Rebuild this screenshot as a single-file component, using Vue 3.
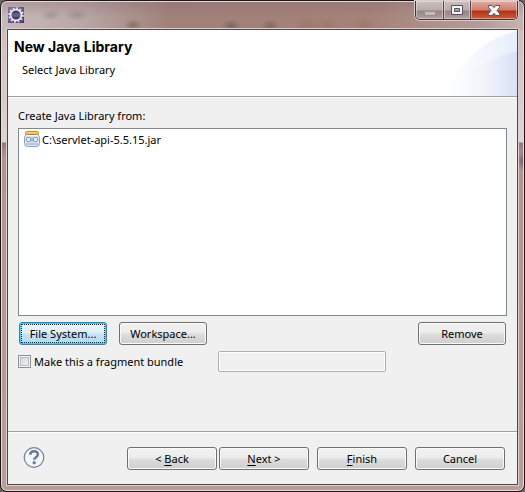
<script setup>
import { ref } from 'vue'

const libraries = ref(['C:\\servlet-api-5.5.15.jar'])
const fragment = ref(false)
const host = ref('')
</script>

<template>
  <div class="desktop">
    <div class="window">
      <div class="titlebar">
        <svg class="app-icon" viewBox="0 0 16 16" aria-hidden="true">
          <defs>
            <linearGradient id="appBg" x1="0" y1="0" x2="1" y2="1">
              <stop offset="0" stop-color="#8272a4" />
              <stop offset="1" stop-color="#4a3584" />
            </linearGradient>
            <linearGradient id="appCore" x1="0" y1="0" x2="0" y2="1">
              <stop offset="0" stop-color="#302c56" />
              <stop offset=".5" stop-color="#5d5b80" />
              <stop offset="1" stop-color="#28244c" />
            </linearGradient>
          </defs>
          <rect width="16" height="16" fill="url(#appBg)" />
          <circle cx="8" cy="8" r="6.9" fill="none" stroke="#e4dfdc" stroke-width="1.8" stroke-dasharray="1.9 1.71" />
          <circle cx="8" cy="8" r="5.4" fill="url(#appCore)" stroke="#efebe7" stroke-width="1.7" />
          <path d="M3.5 7h9M3.5 9h9" stroke="#817e9c" stroke-width=".6" />
        </svg>
        <div class="caption">
          <button class="cap min" aria-label="Minimize" disabled>
            <svg viewBox="0 0 12 5" width="12" height="5"><rect x=".5" y=".5" width="11" height="4" fill="#c5bab9" stroke="#9a8f90" /></svg>
          </button>
          <button class="cap max" aria-label="Maximize">
            <svg viewBox="0 0 12 10" width="12" height="10">
              <path fill-rule="evenodd" d="M.5.5h11v9H.5zM3.500 3.500v3h5v-3z" fill="#f5f3f3" stroke="#555063" />
            </svg>
          </button>
          <button class="cap close" aria-label="Close">
            <svg viewBox="0 0 12 11" width="12" height="11">
              <path d="M.5.5h3.700L6 2.700 7.800.5h3.700v2L9 5.500l2.500 3v2H7.800L6 8.300l-1.800 2.200H.5v-2l2.500-3-2.500-3z" fill="#f7f5f5" stroke="#575464" />
            </svg>
          </button>
        </div>
      </div>

      <main class="client">
        <header class="banner">
          <div class="heading">
            <h1>New Java Library</h1>
            <p>Select Java Library</p>
          </div>
          <svg class="swoosh" viewBox="0 0 75 66" aria-hidden="true">
            <defs>
              <linearGradient id="sw1"><stop offset="0" stop-color="#fff" /><stop offset="1" stop-color="#e9effa" /></linearGradient>
              <linearGradient id="sw2"><stop offset=".1" stop-color="#fff" stop-opacity="0" /><stop offset="1" stop-color="#d9e1f6" /></linearGradient>
              <linearGradient id="sw3"><stop offset="0" stop-color="#fff" stop-opacity="0" /><stop offset="1" stop-color="#e4edfa" /></linearGradient>
            </defs>
            <path d="M2 66C20 28 42 9 75 1v65z" fill="url(#sw1)" />
            <path d="M28 66C35 32 51 10 75 1v65z" fill="url(#sw3)" />
            <path d="M2 66C23 42 47 26 75 22v44z" fill="url(#sw2)" />
          </svg>
        </header>

        <section class="body">
          <label id="list-label" class="list-label">Create Java Library from:</label>
          <ul class="list" aria-labelledby="list-label">
            <li v-for="lib in libraries" :key="lib">
              <svg viewBox="0 0 16 16" width="16" height="16" aria-hidden="true">
                <rect x=".5" y="3.500" width="15" height="12" rx="3" fill="#d9e5f2" stroke="#8da4be" />
                <path d="M2 13h12" stroke="#b4c7dc" stroke-width="2" />
                <rect x="1.500" y=".5" width="13" height="3" rx="1" fill="#e5bd55" stroke="#b78c24" />
                <path d="M2.500 1.500h11" stroke="#f4d983" />
                <path d="M2 4.500h12" stroke="#f7fafd" />
                <rect x="2.500" y="6.500" width="4" height="4" rx="1.500" fill="#f5f9fd" stroke="#7f96b3" />
                <path d="M8 6v5" stroke="#7f96b3" />
                <rect x="9.500" y="6.500" width="4" height="4" rx="1.500" fill="#f5f9fd" stroke="#7f96b3" />
              </svg>
              <span>{{ lib }}</span>
            </li>
          </ul>
          <div class="actions">
            <button class="btn focused">File System...</button>
            <button class="btn">Workspace...</button>
            <button class="btn push">Remove</button>
          </div>
          <div class="options">
            <label class="check"><input v-model="fragment" type="checkbox" />Make this a fragment bundle</label>
            <input v-model="host" class="field" type="text" aria-label="Fragment host" :disabled="!fragment" />
          </div>
        </section>

        <footer class="footer">
          <button class="help" aria-label="Help">
            <svg viewBox="0 0 22 22" width="22" height="22">
              <circle cx="11" cy="10.500" r="9.800" fill="#f4f5f7" stroke="#71829e" stroke-width="1.200" />
              <path d="M7.300 7.800C7.300 3.100 14.900 3.200 14.900 7.400c0 2.800-3.700 2.800-3.700 5.400" fill="none" stroke="#657a9c" stroke-width="2.500" />
              <rect x="9.700" y="14.200" width="3" height="3" rx="1" fill="#657a9c" />
            </svg>
          </button>
          <div class="nav">
            <button class="btn">&lt; <u>B</u>ack</button>
            <button class="btn"><u>N</u>ext &gt;</button>
          </div>
          <button class="btn"><u>F</u>inish</button>
          <button class="btn">Cancel</button>
        </footer>
      </main>
    </div>
  </div>
</template>

<style>
body {
  margin: 0;
}
</style>

<style scoped>
* {
  box-sizing: border-box;
}
.desktop {
  display: flex;
  min-height: 100vh;
  background: #6b6263;
  font: 11px/16px "Noto Sans", "Open Sans", sans-serif;
  color: #000;
}
.window {
  flex: 1;
  display: flex;
  flex-direction: column;
  padding: 0 5px 5px;
  border: 1px solid #1c1519;
  border-radius: 7px;
  box-shadow: inset 0 0 0 1px #e6dad8;
  background:
    radial-gradient(ellipse 10px 6px at 50px 14px, #74676b55, transparent),
    radial-gradient(ellipse 12px 6px at 76px 14px, #74676b55, transparent),
    radial-gradient(ellipse 9px 6px at 132px 24px, #6c5a5799, transparent),
    radial-gradient(ellipse 10px 7px at 230px 25px, #6c6059bb, transparent),
    radial-gradient(ellipse 9px 7px at 269px 25px, #6c6059aa, transparent),
    radial-gradient(ellipse 12px 8px at 306px 24px, #97745d99, transparent),
    radial-gradient(ellipse 12px 8px at 326px 24px, #97745d99, transparent),
    radial-gradient(ellipse 12px 8px at 363px 24px, #97745d99, transparent),
    radial-gradient(ellipse 8px 10px at 100% 160px, #6b5a74, transparent),
    linear-gradient(#8a6c7466, transparent 16px) 0 0 / 100% 29px no-repeat,
    linear-gradient(90deg, #c8bab9, #b9a7a6 80px, #a08079 170px, #a58279 370px, #b39c99 480px, #c5b4b1) 0 0 / 100% 29px no-repeat,
    linear-gradient(#c9b9b7, #dfd5d3 141px, #927879 142px, #b2958e 155px, #b99e97);
}
.titlebar {
  display: flex;
  justify-content: space-between;
  height: 27px;
  padding: 0 1px 0 2px;
}
.app-icon {
  width: 16px;
  height: 16px;
  margin-top: 6px;
}
.caption {
  display: flex;
  height: 19px;
  border: 1px solid #403438;
  border-top: 0;
  border-radius: 0 0 5px 5px;
  box-shadow: 0 0 0 1px #d9cbc9;
  overflow: hidden;
}
.cap {
  display: flex;
  align-items: center;
  justify-content: center;
  width: 28px;
  padding: 0;
  border: 0;
  border-right: 1px solid #51454a;
  box-shadow: inset 0 0 0 1px #ffffff66;
  background: linear-gradient(#cdbfbf, #b9aaab 9px, #968383 10px, #b3a09e);
}
.cap.min {
  padding-top: 6px;
}
.cap.max {
  width: 27px;
}
.cap.close {
  width: 46px;
  border-right: 0;
  background: linear-gradient(#e2aaa0, #cf7e70 9px, #ae3217 10px, #d25a38);
}
.client {
  flex: 1;
  display: flex;
  flex-direction: column;
  border: 1px solid #534548;
  outline: 1px solid #ddcfcd;
  background: #f0f0f0;
  margin: 1px;
}
.banner {
  display: flex;
  justify-content: space-between;
  height: 68px;
  background: #fff;
  border-bottom: 1px solid #fff;
  box-shadow: inset 0 -1px #a0a0a0;
}
.heading {
  padding: 8px 6px;
}
h1 {
  margin: 0;
  font: bold 14px/17px Inter, "Liberation Sans", Arial, sans-serif;
}
p {
  margin: 7px 8px 0;
}
.swoosh {
  width: 75px;
  height: 66px;
}
.body {
  flex: 1;
  display: flex;
  flex-direction: column;
  padding: 10px 10px 59px;
}
.list-label {
  line-height: 16px;
}
.list {
  flex: 1;
  margin: 4px 0 0;
  padding: 2px 5px;
  border: 1px solid #828790;
  background: #fff;
  list-style: none;
}
.list li {
  display: flex;
  gap: 2px;
  line-height: 18px;
}
.btn {
  width: 88px;
  height: 23px;
  padding: 0;
  border: 1px solid #707070;
  border-radius: 3px;
  box-shadow: inset 0 0 0 1px #fafafa;
  background: linear-gradient(#f2f2f2, #ebebeb 48%, #dddddd 52%, #cfcfcf);
  color: #000;
  font: inherit;
}
.focused {
  border-color: #3c7fb1;
  box-shadow: inset 0 0 0 1px #48c8f3;
  background: linear-gradient(#eaf4fa, #dceef8 48%, #c5e2f1 52%, #b5d9ea);
  outline: 1px dotted #222;
  outline-offset: -3px;
}
.actions {
  display: flex;
  gap: 12px;
  margin: 6px 1px;
}
.push {
  margin-left: auto;
}
.options {
  display: flex;
  align-items: center;
}
.check {
  display: flex;
  align-items: center;
  gap: 3px;
  width: 200px;
}
.check input {
  appearance: none;
  width: 13px;
  height: 13px;
  margin: 0;
  border: 1px solid #8e8f8f;
  box-shadow: inset 0 0 0 1px #f4f4f4, inset 0 0 0 2px #b9bec4;
  background: linear-gradient(135deg, #cbcfd5, #f6f6f6);
}
.field {
  width: 168px;
  height: 21px;
  border: 1px solid #afafaf;
  border-radius: 2px;
  box-shadow: inset 0 0 0 1px #fff;
  background: #f0f0f0;
  font: inherit;
}
.footer {
  display: flex;
  align-items: flex-start;
  gap: 8px;
  padding: 15px 12px 14px 15px;
  border-top: 1px solid #a0a0a0;
  box-shadow: inset 0 1px #fff;
}
.footer .btn {
  width: 90px;
}
.help {
  display: flex;
  margin-right: auto;
  padding: 0;
  border: 0;
  background: none;
}
.nav {
  display: flex;
  gap: 2px;
}
u {
  text-underline-offset: 2px;
}
</style>
